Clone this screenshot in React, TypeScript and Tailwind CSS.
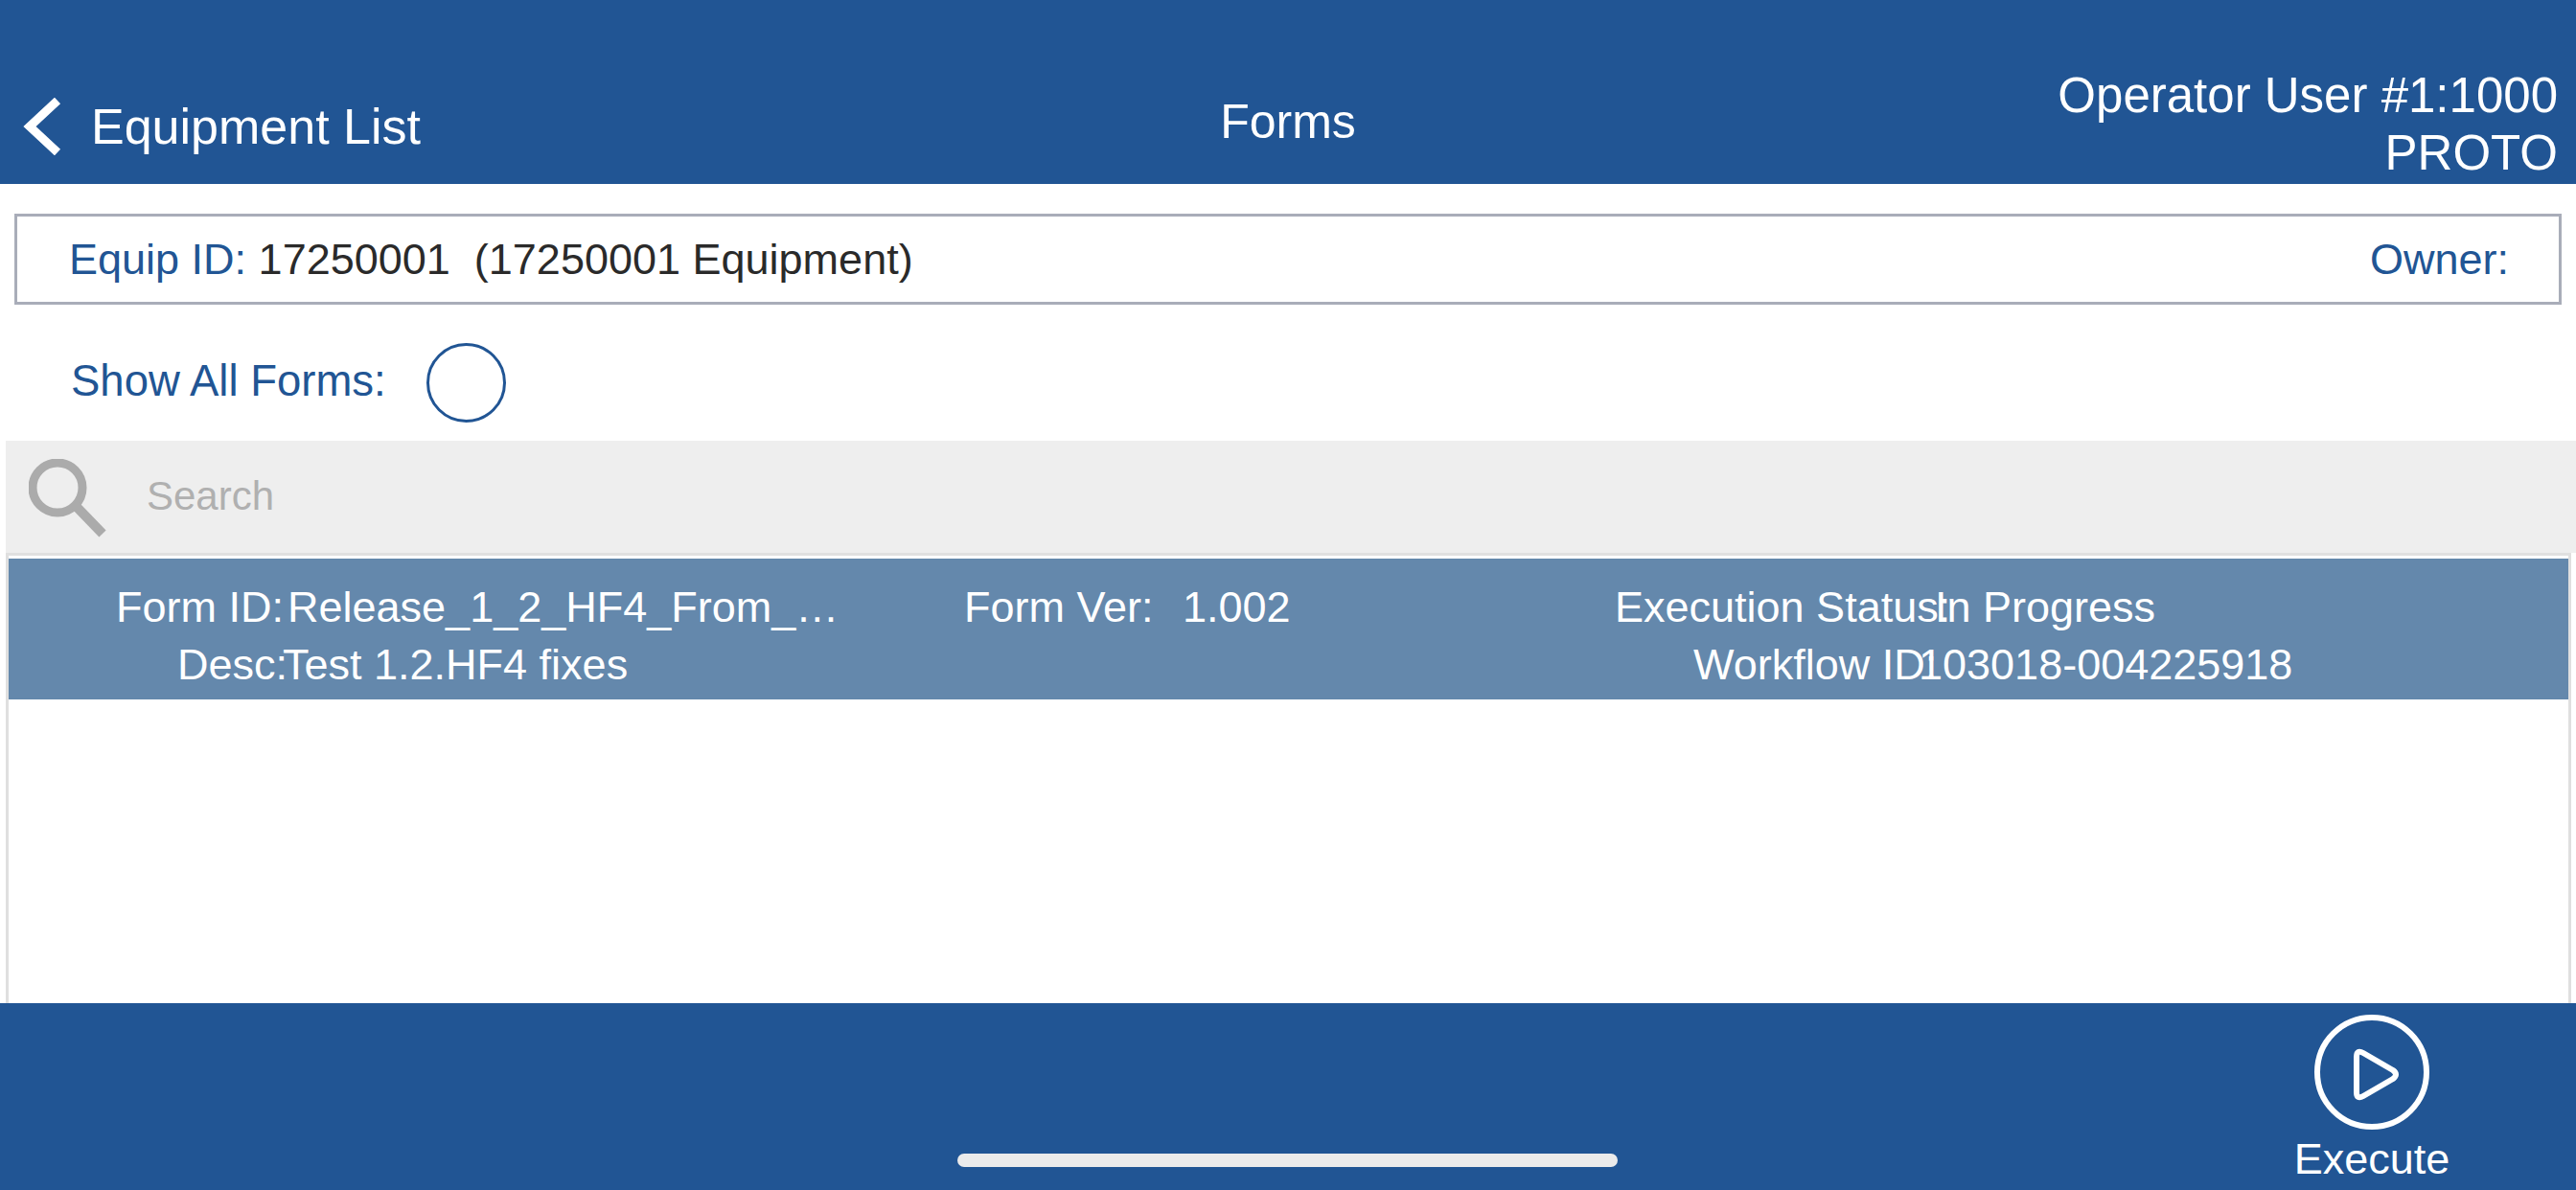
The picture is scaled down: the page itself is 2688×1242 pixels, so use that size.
export default function App() {
  return (
    <div className="w-[2688px] h-[1242px] bg-white flex flex-col overflow-hidden font-['Liberation_Sans',Arial,sans-serif]">
      <header className="h-[192px] shrink-0 bg-[#215594] text-white flex items-start justify-between relative">
        <div className="flex items-center mt-[100px] ml-[24px] gap-[31px]">
          <svg width="40" height="60" viewBox="0 0 40 60" fill="none" stroke="#fff" strokeWidth="9"><path d="M36 3 L7 30 L36 57" /></svg>
          <span className="text-[52px] leading-[64px]">Equipment List</span>
        </div>
        <div className="absolute left-0 right-0 top-[97px] text-center text-[50px] leading-[60px]">Forms</div>
        <div className="mt-[70px] mr-[19px] text-right text-[51px] leading-[60px]">
          <div>Operator User #1:1000</div>
          <div>PROTO</div>
        </div>
      </header>
      <main className="flex-1 flex flex-col min-h-0">
        <div className="mt-[31px] mx-[15px] w-[2658px] h-[95px] border-[3px] border-[#a9adb9] flex items-center justify-between pl-[54px] pr-[52px] text-[45px]">
          <div className="text-[#2a2a2a]"><span className="text-[#215594]">Equip ID: </span>17250001&nbsp; (17250001 Equipment)</div>
          <div className="text-[#215594]">Owner:</div>
        </div>
        <div className="h-[142px] shrink-0 flex items-center pt-[20px] pl-[74px] gap-[42px]">
          <span className="text-[45.5px] text-[#215594] -mt-[2px]">Show All Forms:</span>
          <div className="w-[83px] h-[83px] rounded-full border-[3px] border-[#215594]"></div>
        </div>
        <div className="ml-[6px] h-[117px] shrink-0 bg-[#eeeeee] flex items-center pl-[24px] gap-[39px]">
          <svg width="84" height="84" viewBox="0 0 84 84" fill="none" stroke="#ababab" className="mt-[5px]"><circle cx="30" cy="30" r="26" strokeWidth="9" /><path d="M49 49 L77 78" strokeWidth="10" /></svg>
          <span className="text-[42px] text-[#b0b0b0] -mt-[2px]">Search</span>
        </div>
        <div className="ml-[6px] mr-[5px] flex-1 border-x-[3px] border-t-[3px] pt-[3px] border-x-[#dfdfdf] border-t-[#e0e0e0] bg-white">
          <div className="h-[147px] pt-[14px] bg-[#6488ac] text-white text-[45px] leading-[60px] flex flex-col justify-center">
            <div className="flex whitespace-nowrap">
              <div className="w-[287px] text-right">Form ID:</div>
              <div className="w-[710px] pl-[4px]">Release_1_2_HF4_From_…</div>
              <div className="w-[228px]">Form Ver:</div>
              <div className="w-[451px]">1.002</div>
              <div className="w-[334px]">Execution Status:</div>
              <div>In Progress</div>
            </div>
            <div className="flex whitespace-nowrap">
              <div className="w-[291px] text-right">Desc:</div>
              <div className="w-[1472px] -ml-[5px]">Test 1.2.HF4 fixes</div>
              <div className="w-[235px]">Workflow ID:</div>
              <div>103018-004225918</div>
            </div>
          </div>
        </div>
      </main>
      <footer className="h-[195px] shrink-0 bg-[#215594] text-white relative">
        <div className="absolute right-[123px] top-[12px] flex flex-col items-center w-[180px]">
          <svg width="120" height="120" viewBox="0 0 120 120" fill="none" stroke="#fff" strokeWidth="6"><circle cx="60" cy="60" r="57" /><path d="M44 44 Q44 36 51 40 L82 58 Q88 62.5 82 67 L51 85 Q44 89 44 81 Z" strokeLinejoin="round" /></svg>
          <span className="text-[45px] leading-[50px] mt-[6px]">Execute</span>
        </div>
        <div className="absolute left-[999px] top-[157px] w-[689px] h-[14px] rounded-full bg-[#ebebeb]"></div>
      </footer>
    </div>
  );
}
